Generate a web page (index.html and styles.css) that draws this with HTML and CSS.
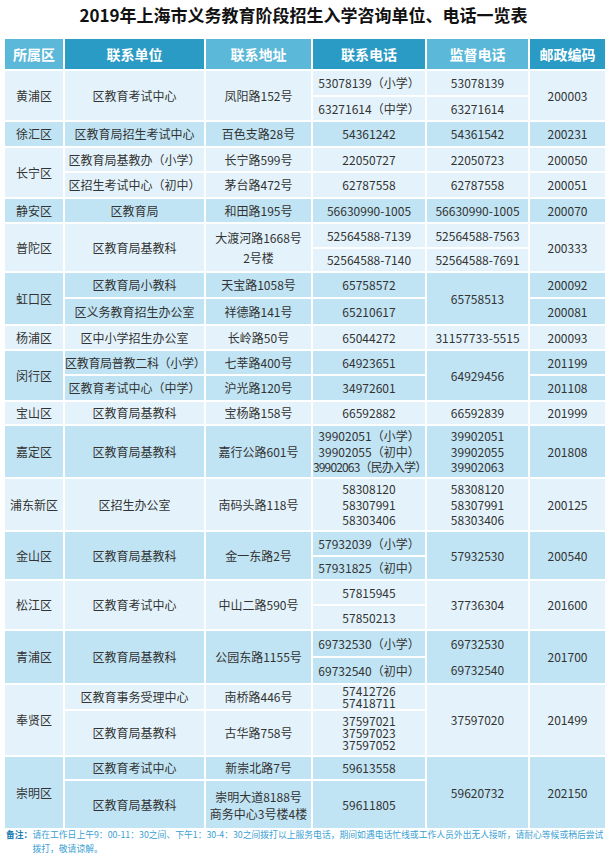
FILE: index.html
```html
<!DOCTYPE html>
<html lang="zh-CN">
<head>
<meta charset="utf-8">
<title>2019年上海市义务教育阶段招生入学咨询单位、电话一览表</title>
<link rel="stylesheet" href="styles.css">
</head>
<body>
<h1 class="title">2019年上海市义务教育阶段招生入学咨询单位、电话一览表</h1>
<table class="grid">
<colgroup><col class="c1"><col class="c2"><col class="c3"><col class="c4"><col class="c5"><col class="c6"></colgroup>
<thead>
<tr class="head"><th class="hl">所属区</th><th class="hd">联系单位</th><th class="hl">联系地址</th><th class="hd">联系电话</th><th class="hl">监督电话</th><th class="hd">邮政编码</th></tr>
</thead>
<tbody>
<tr class="lt r26"><td rowspan="2">黄浦区</td><td rowspan="2">区教育考试中心</td><td rowspan="2">凤阳路152号</td><td>53078139（小学）</td><td>53078139</td><td rowspan="2">200003</td></tr>
<tr class="lt r25"><td>63271614（中学）</td><td>63271614</td></tr>

<tr class="dk r26"><td>徐汇区</td><td>区教育局招生考试中心</td><td>百色支路28号</td><td>54361242</td><td>54361542</td><td>200231</td></tr>

<tr class="lt r25"><td rowspan="2">长宁区</td><td>区教育局基教办（小学）</td><td>长宁路599号</td><td>22050727</td><td>22050723</td><td>200050</td></tr>
<tr class="lt r26"><td>区招生考试中心（初中）</td><td>茅台路472号</td><td>62787558</td><td>62787558</td><td>200051</td></tr>

<tr class="dk r25"><td>静安区</td><td>区教育局</td><td>和田路195号</td><td>56630990-1005</td><td>56630990-1005</td><td>200070</td></tr>

<tr class="lt r25"><td rowspan="2">普陀区</td><td rowspan="2">区教育局基教科</td><td rowspan="2" class="addr2">大渡河路1668号<br>2号楼</td><td>52564588-7139</td><td>52564588-7563</td><td rowspan="2">200333</td></tr>
<tr class="lt r24"><td>52564588-7140</td><td>52564588-7691</td></tr>

<tr class="dk r26"><td rowspan="2">虹口区</td><td>区教育局小教科</td><td>天宝路1058号</td><td>65758572</td><td rowspan="2">65758513</td><td>200092</td></tr>
<tr class="dk r27"><td>区义务教育招生办公室</td><td>祥德路141号</td><td>65210617</td><td>200081</td></tr>

<tr class="lt r25"><td>杨浦区</td><td>区中小学招生办公室</td><td>长岭路50号</td><td>65044272</td><td>31157733-5515</td><td>200093</td></tr>

<tr class="dk r25"><td rowspan="2">闵行区</td><td class="tight">区教育局普教二科（小学）</td><td>七莘路400号</td><td>64923651</td><td rowspan="2">64929456</td><td>201199</td></tr>
<tr class="dk r26"><td>区教育考试中心（中学）</td><td>沪光路120号</td><td>34972601</td><td>201108</td></tr>

<tr class="lt r24"><td>宝山区</td><td>区教育局基教科</td><td>宝杨路158号</td><td>66592882</td><td>66592839</td><td>201999</td></tr>

<tr class="dk r53"><td>嘉定区</td><td>区教育局基教科</td><td>嘉行公路601号</td><td class="multi">39902051（小学）<br>39902055（初中）<br><span class="squeeze">39902063（民办入学）</span></td><td class="multi">39902051<br>39902055<br>39902063</td><td>201808</td></tr>

<tr class="lt r53"><td>浦东新区</td><td>区招生办公室</td><td>南码头路118号</td><td class="multi">58308120<br>58307991<br>58303406</td><td class="multi">58308120<br>58307991<br>58303406</td><td>200125</td></tr>

<tr class="dk r25"><td rowspan="2">金山区</td><td rowspan="2">区教育局基教科</td><td rowspan="2">金一东路2号</td><td>57932039（小学）</td><td rowspan="2">57932530</td><td rowspan="2">200540</td></tr>
<tr class="dk r24"><td>57931825（初中）</td></tr>

<tr class="lt r25"><td rowspan="2">松江区</td><td rowspan="2">区教育考试中心</td><td rowspan="2">中山二路590号</td><td>57815945</td><td rowspan="2">37736304</td><td rowspan="2">201600</td></tr>
<tr class="lt r25"><td>57850213</td></tr>

<tr class="dk r27"><td rowspan="2">青浦区</td><td rowspan="2">区教育局基教科</td><td rowspan="2">公园东路1155号</td><td>69732530（小学）</td><td class="join-top">69732530</td><td rowspan="2">201700</td></tr>
<tr class="dk r27"><td>69732540（初中）</td><td class="join-bottom">69732540</td></tr>

<tr class="lt r25"><td rowspan="2">奉贤区</td><td>区教育事务受理中心</td><td>南桥路446号</td><td class="stack">57412726<br>57418711</td><td rowspan="2">37597020</td><td rowspan="2">201499</td></tr>
<tr class="lt r46"><td>区教育局基教科</td><td>古华路758号</td><td class="stack">37597021<br>37597023<br>37597052</td></tr>

<tr class="dk r24"><td rowspan="2">崇明区</td><td>区教育考试中心</td><td>新崇北路7号</td><td>59613558</td><td rowspan="2">59620732</td><td rowspan="2">202150</td></tr>
<tr class="dk r49"><td>区教育局基教科</td><td class="multi addr">崇明大道8188号<br>商务中心3号楼4楼</td><td>59611805</td></tr>
</tbody>
</table>
<div class="note">
<span class="note-label">备注：</span>
<p class="note-text">请在工作日上午9：00-11：30之间、下午1：30-4：30之间拨打以上服务电话，期间如遇电话忙线或工作人员外出无人接听，请耐心等候或稍后尝试<br>拨打，敬请谅解。</p>
</div>
</body>
</html>
```

FILE: styles.css
```css
html, body {
  margin: 0;
  padding: 0;
  background: #ffffff;
}

body {
  width: 607px;
  font-family: "Noto Sans CJK SC", "Noto Sans", sans-serif;
  color: #333333;
}

.title {
  margin: 0;
  height: 37px;
  line-height: 30px;
  text-align: center;
  font-size: 17px;
  font-weight: 700;
  color: #111111;
}

.grid {
  margin-left: 3px;
  width: 602px;
  border-collapse: collapse;
  table-layout: fixed;
}

.c1 { width: 60px; }
.c2 { width: 141px; }
.c3 { width: 107px; }
.c4 { width: 114px; }
.c5 { width: 103px; }
.c6 { width: 77px; }

.grid th,
.grid td {
  border: 2px solid #ffffff;
  padding: 0;
  text-align: center;
  vertical-align: middle;
  white-space: nowrap;
  overflow: hidden;
}

.grid td {
  font-size: 12px;
  line-height: 16px;
  color: #333333;
}

.head { height: 32px; }

.grid th {
  font-size: 14px;
  font-weight: 700;
  color: #ffffff;
  line-height: 20px;
}

.hl { background: #5bb8d8; }
.hd { background: #2a9bc4; }

.lt td { background: #e4f3fb; }
.dk td { background: #c1e4f4; }

.r24 { height: 24px; }
.r25 { height: 25px; }
.r26 { height: 26px; }
.r27 { height: 27px; }
.r46 { height: 46px; }
.r49 { height: 49px; }
.r53 { height: 53px; }

.grid td.multi { line-height: 15.5px; }
.grid td.stack { line-height: 12px; overflow: visible; }
.grid td.addr { line-height: 17px; }
.grid td.addr2 { line-height: 20px; }
.grid td.tight { letter-spacing: -0.3px; }

.squeeze { letter-spacing: -0.85px; }

.grid td.join-top { border-bottom-style: hidden; }
.grid td.join-bottom { border-top-style: hidden; }

.note {
  display: flex;
  align-items: flex-start;
  margin: -2px 0 0 6px;
  font-size: 8.8px;
  line-height: 13.5px;
}

.note-label {
  flex: none;
  font-weight: 700;
  color: #1c7db4;
}

.note-text {
  margin: 0;
  color: #3a9fd4;
  white-space: nowrap;
}
```
